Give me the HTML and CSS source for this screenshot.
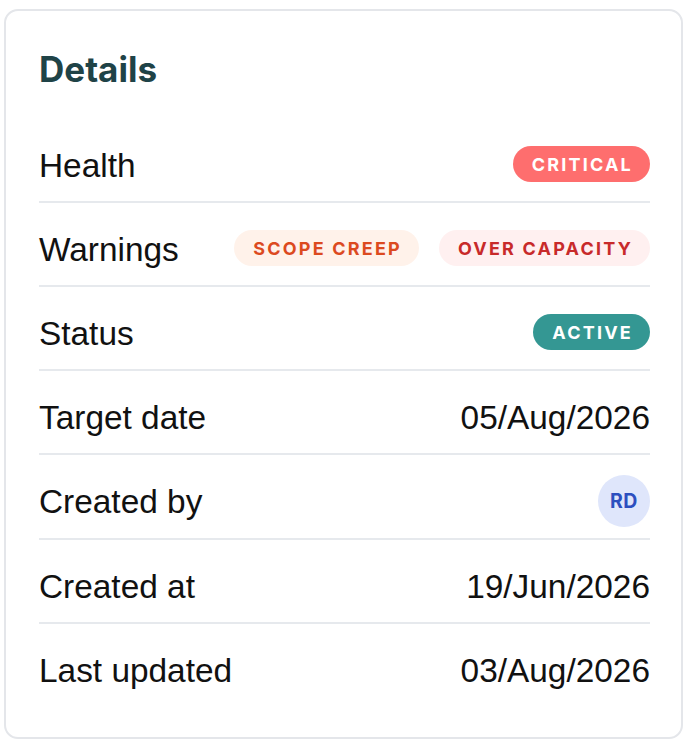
FILE: index.html
```html
<!DOCTYPE html>
<html lang="en">
<head>
<meta charset="utf-8">
<title>Details</title>
<link rel="stylesheet" href="styles.css">
</head>
<body>
<section class="card">
  <h2 class="title">Details</h2>
  <div class="rows">
    <div class="row">
      <span class="label">Health</span>
      <span class="badge badge-critical">Critical</span>
    </div>
    <div class="row">
      <span class="label">Warnings</span>
      <div class="badges">
        <span class="badge badge-scope">Scope creep</span>
        <span class="badge badge-capacity">Over capacity</span>
      </div>
    </div>
    <div class="row">
      <span class="label">Status</span>
      <span class="badge badge-active">Active</span>
    </div>
    <div class="row">
      <span class="label">Target date</span>
      <span class="value">05/Aug/2026</span>
    </div>
    <div class="row">
      <span class="label">Created by</span>
      <span class="avatar">RD</span>
    </div>
    <div class="row">
      <span class="label">Created at</span>
      <span class="value">19/Jun/2026</span>
    </div>
    <div class="row">
      <span class="label">Last updated</span>
      <span class="value">03/Aug/2026</span>
    </div>
  </div>
</section>
</body>
</html>
```

FILE: styles.css
```css
html, body {
  margin: 0;
  padding: 0;
  background: #ffffff;
}

body {
  font-family: "Liberation Sans", Arial, sans-serif;
  color: #111111;
}

.card {
  box-sizing: border-box;
  width: 679px;
  margin: 9px 0 0 4px;
  padding: 37px 31px 31px 33px;
  border: 2px solid #e4e6ea;
  border-radius: 14px;
  background: #ffffff;
}

.title {
  margin: 0 0 29px;
  font-family: Inter, "Liberation Sans", sans-serif;
  font-weight: 700;
  font-size: 35px;
  line-height: 42px;
  color: #1f4347;
}

.rows {
  display: flex;
  flex-direction: column;
}

.row {
  display: flex;
  align-items: center;
  justify-content: space-between;
  min-height: 51px;
  padding: 19.5px 0 11.5px;
  border-bottom: 2px solid #e6e9ed;
}

.row:last-child {
  border-bottom: none;
}

.label,
.value {
  font-size: 33.4px;
  line-height: 51px;
  margin: 1px 0 -1px;
}

.badges {
  display: flex;
  gap: 20px;
}

.badge {
  display: inline-flex;
  align-items: center;
  height: 36px;
  padding: 0 17px 0 19px;
  border-radius: 18px;
  font-family: Inter, "Liberation Sans", sans-serif;
  font-weight: 700;
  font-size: 18px;
  letter-spacing: 2.2px;
  text-transform: uppercase;
  box-sizing: border-box;
}

.badge-critical {
  background: #fe6e6e;
  color: #ffffff;
}

.badge-scope {
  background: #fff2ea;
  color: #dc4a1f;
}

.badge-capacity {
  background: #fff0f0;
  color: #c82a2a;
}

.badge-active {
  background: #349793;
  color: #ffffff;
}

.avatar {
  display: inline-flex;
  align-items: center;
  justify-content: center;
  width: 52px;
  height: 52px;
  border-radius: 50%;
  background: #dfe6fb;
  color: #2c4fbf;
  font-family: Inter, "Liberation Sans", sans-serif;
  font-weight: 700;
  font-size: 19.5px;
  letter-spacing: 0.5px;
}
```
